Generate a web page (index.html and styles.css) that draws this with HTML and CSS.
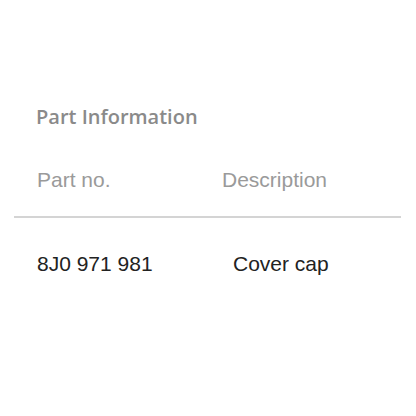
FILE: index.html
```html
<!DOCTYPE html>
<html lang="en">
<head>
    <meta charset="UTF-8">
    <meta name="viewport" content="width=device-width, initial-scale=1.0">
    <title>Part Information</title>
    <link rel="stylesheet" href="styles.css">
</head>
<body>
    <div class="panel">
        <h3 class="title">Part Information</h3>

        <div class="parts">
            <div class="row head">
                <span class="col-no">Part no.</span>
                <span class="col-desc">Description</span>
            </div>
            <div class="row item">
                <span class="col-no">8J0 971 981</span>
                <span class="col-desc">Cover cap</span>
            </div>
        </div>
    </div>
</body>
</html>
```

FILE: styles.css
```css
body {
    margin: 0;
    font-family: "Liberation Sans", Arial, sans-serif;
    background-color: #fff;
    color: #222;
}

.panel {
    padding: 100px 15px 0 14px;
}

.title {
    margin: 0 0 0 22px;
    font-family: "Open Sans", sans-serif;
    font-weight: 600;
    font-size: 20px;
    line-height: 34px;
    color: #8a8a8a;
}

.parts {
    margin-top: 34px;
}

.row {
    display: flex;
    padding-left: 23px;
    font-size: 21px;
}

.row .col-no {
    width: 185px;
}

.head {
    color: #9a9a9a;
    padding-bottom: 24px;
    border-bottom: 2px solid #d4d4d4;
}

.item {
    padding-top: 34px;
}

.item .col-desc {
    margin-left: 11px;
}
```
